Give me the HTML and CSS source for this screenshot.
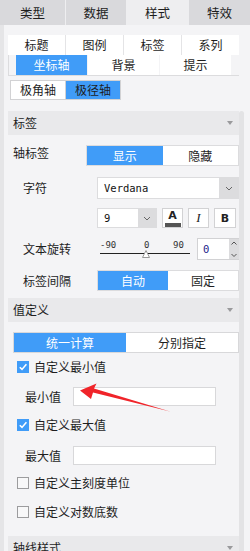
FILE: index.html
```html
<!DOCTYPE html>
<html lang="zh">
<head>
<meta charset="utf-8">
<link rel="stylesheet" href="styles.css">
</head>
<body>
<div class="app">
  <div class="tabs">
    <div class="tab">类型</div>
    <div class="tab">数据</div>
    <div class="tab active">样式</div>
    <div class="tab">特效</div>
  </div>
  <div class="main">
    <div class="gutter"></div>
    <div class="content">
      <div class="subtabs">
        <div class="subtab">标题</div>
        <div class="subtab">图例</div>
        <div class="subtab">标签</div>
        <div class="subtab">系列</div>
      </div>
      <div class="subtabs2">
        <div class="subtab2 on">坐标轴</div>
        <div class="subtab2">背景</div>
        <div class="subtab2">提示</div>
      </div>
      <div class="axis-switch">
        <div class="axis-item">极角轴</div>
        <div class="axis-item on">极径轴</div>
      </div>

      <div class="section-head"><span>标签</span><span class="caret"></span></div>

      <div class="row row-top">
        <div class="lbl lbl-main">轴标签</div>
        <div class="seg seg-wide">
          <div class="seg-item on">显示</div>
          <div class="seg-item">隐藏</div>
        </div>
      </div>

      <div class="row row-font">
        <div class="lbl lbl-sub">字符</div>
        <div class="select select-font">
          <span class="select-text">Verdana</span>
          <span class="select-arrow"><svg width="8" height="5" viewBox="0 0 8 5"><path d="M1 1 L4 4 L7 1" fill="none" stroke="#666" stroke-width="1"/></svg></span>
        </div>
      </div>

      <div class="row row-size">
        <div class="select select-size">
          <span class="select-text">9</span>
          <span class="select-arrow"><svg width="8" height="5" viewBox="0 0 8 5"><path d="M1 1 L4 4 L7 1" fill="none" stroke="#666" stroke-width="1"/></svg></span>
        </div>
        <div class="fbtn fbtn-a"><span class="a-glyph">A</span><span class="a-bar"></span></div>
        <div class="fbtn fbtn-i">I</div>
        <div class="fbtn fbtn-b">B</div>
      </div>

      <div class="row row-rot">
        <div class="lbl lbl-sub">文本旋转</div>
        <svg class="slider" width="100" height="22" viewBox="0 0 100 22">
          <text x="3" y="10" class="tick">-90</text>
          <text x="47" y="10" class="tick">0</text>
          <text x="76" y="10" class="tick">90</text>
          <line x1="3" y1="15.5" x2="93" y2="15.5" stroke="#222" stroke-width="1"/>
          <path d="M49 12.5 L52.5 19.5 L45.5 19.5 Z" fill="#fff" stroke="#999" stroke-width="1"/>
        </svg>
        <div class="numbox">
          <span class="num-text">0</span>
          <span class="spin">
            <svg width="10" height="22" viewBox="0 0 10 22"><path d="M2.5 5.5 L5 3 L7.5 5.5" fill="none" stroke="#555" stroke-width="1"/><path d="M2.5 15 L5 17.5 L7.5 15" fill="none" stroke="#555" stroke-width="1"/></svg>
          </span>
        </div>
      </div>

      <div class="row row-gap">
        <div class="lbl lbl-sub">标签间隔</div>
        <div class="seg seg-mid">
          <div class="seg-item on">自动</div>
          <div class="seg-item">固定</div>
        </div>
      </div>

      <div class="section-head head-val"><span>值定义</span><span class="caret"></span></div>

      <div class="seg seg-full">
        <div class="seg-item on">统一计算</div>
        <div class="seg-item">分别指定</div>
      </div>

      <div class="check-row cr-1"><span class="cb checked"><svg width="10" height="10" viewBox="0 0 10 10"><path d="M1.8 5.2 L4 7.4 L8.4 2.2" fill="none" stroke="#fff" stroke-width="1.6"/></svg></span><span>自定义最小值</span></div>
      <div class="val-row vr-1"><div class="lbl lbl-val">最小值</div><div class="input"></div></div>

      <div class="check-row cr-2"><span class="cb checked"><svg width="10" height="10" viewBox="0 0 10 10"><path d="M1.8 5.2 L4 7.4 L8.4 2.2" fill="none" stroke="#fff" stroke-width="1.6"/></svg></span><span>自定义最大值</span></div>
      <div class="val-row vr-2"><div class="lbl lbl-val">最大值</div><div class="input"></div></div>

      <div class="check-row cr-3"><span class="cb"></span><span>自定义主刻度单位</span></div>
      <div class="check-row cr-4"><span class="cb"></span><span>自定义对数底数</span></div>

      <div class="section-head head-axis"><span>轴线样式</span><span class="caret"></span></div>
    </div>
    <div class="scroll"><div class="thumb"></div></div>
  </div>
  <svg class="annot" width="250" height="551" viewBox="0 0 250 551">
    <polygon points="80,390.5 96.5,383.5 94,388.5 170,411.5 93,392.5 91,399" fill="#f0242a"/>
  </svg>
</div>
</body>
</html>
```
FILE: styles.css
```css
* { box-sizing: border-box; margin: 0; padding: 0; }
html, body { width: 250px; height: 551px; overflow: hidden; }
body {
  background: #f4f4f6;
  font-family: "Noto Sans CJK SC", "Noto Sans", sans-serif;
  font-size: 12px;
  color: #1e1e1e;
}
.app { position: relative; width: 250px; height: 551px; overflow: hidden; }

.tabs {
  display: grid;
  grid-template-columns: 65px 60px 61px 61px;
  column-gap: 1px;
  height: 25px;
  background: #eeeef0;
}
.tab {
  background: #d9d9dc;
  text-align: center;
  line-height: 25px;
  font-size: 12.5px;
}
.tab.active { background: #eeeef0; }

.main { display: flex; height: 526px; }
.gutter { width: 4px; background: #e5e5e7; }
.content { width: 235px; padding-left: 4px; overflow: hidden; }
.scroll { width: 11px; position: relative; }
.thumb {
  position: absolute; left: 0; top: 86px; width: 5px; bottom: 0;
  background: #e3e3e5; border-radius: 3px 3px 0 0;
}

.subtabs {
  margin-top: 10px;
  display: grid;
  grid-template-columns: repeat(4, 57px);
  column-gap: 1px;
  width: 231px;
  height: 20px;
  background: #e4e4e6;
}
.subtab { background: #fff; text-align: center; line-height: 20px; }

.subtabs2 {
  display: flex;
  gap: 1px;
  width: 231px;
  height: 21px;
  padding-left: 7px;
  border-left: 1px solid #dcdcde;
  border-bottom: 1px solid #dcdcde;
}
.subtab2 { width: 71px; height: 20px; background: #fff; text-align: center; line-height: 20px; }
.subtab2.on { background: #409cf8; color: #fff; }

.axis-switch {
  margin-top: 4px;
  margin-left: 2px;
  display: flex;
  width: 111px;
  height: 20px;
  border: 1px solid #d2d2d4;
}
.axis-item { width: 54px; background: #fff; text-align: center; line-height: 18px; }
.axis-item.on { width: 55px; background: #409cf8; border-left: 1px solid #d2d2d4; }

.section-head {
  margin-top: 11px;
  height: 24px;
  background: #e9e9eb;
  padding-left: 5px;
  padding-right: 6px;
  display: flex;
  justify-content: space-between;
  align-items: center;
  line-height: 24px;
}
.head-val { margin-top: 7px; }
.head-axis { margin-top: 16px; }
.caret {
  width: 0; height: 0;
  border-left: 3.5px solid transparent;
  border-right: 3.5px solid transparent;
  border-top: 4px solid #9a9a9c;
}

.row { display: flex; align-items: center; }
.lbl { flex: none; line-height: 16px; }
.lbl-main { width: 78px; padding-left: 5px; align-self: flex-start; }
.lbl-sub { width: 89px; padding-left: 15px; }

.row-top { margin-top: 10px; height: 21px; align-items: flex-start; }
.seg { display: flex; border: 1px solid #dcdcde; background: #fff; height: 21px; }
.seg-item { flex: 1; text-align: center; line-height: 19px; }
.seg-item.on { background: #409cf8; color: #fff; }
.seg-wide { width: 153px; }
.seg-mid { width: 142px; }
.seg-full { margin-top: 10px; margin-left: 5px; width: 226px; border-color: #d8d8da; }

.row-font { margin-top: 11px; height: 22px; }
.select {
  display: flex;
  background: #fff;
  border: 1px solid #dcdcde;
  height: 100%;
}
.select-font { width: 142px; }
.select-text {
  flex: 1;
  padding-left: 6px;
  font-family: "DejaVu Sans Mono", monospace;
  font-size: 10.5px;
  color: #111;
  display: flex;
  align-items: center;
}
.select-arrow {
  width: 19px;
  background: #dcdcde;
  display: flex;
  align-items: center;
  justify-content: center;
}

.row-size { margin-top: 9px; height: 20px; padding-left: 89px; }
.select-size { width: 60px; }
.select-size .select-arrow { width: 18px; }
.fbtn {
  height: 20px;
  width: 21px;
  margin-left: 5px;
  background: #fff;
  border: 1px solid #d2d2d4;
  display: flex;
  align-items: center;
  justify-content: center;
  color: #222;
}
.fbtn-b { width: 22px; font-family: "DejaVu Sans", sans-serif; font-weight: bold; font-size: 11px; }
.fbtn-i { font-family: "Liberation Serif", serif; font-style: italic; font-size: 13px; }
.fbtn-a { flex-direction: column; justify-content: flex-start; padding-top: 0; }
.a-glyph { font-family: "DejaVu Sans", sans-serif; font-weight: bold; font-size: 11px; line-height: 12px; margin-top: 1px; }
.a-bar { width: 16px; height: 4px; background: #555; margin-top: 1px; }

.row-rot { margin-top: 10px; height: 22px; }
.slider { flex: none; display: block; }
.tick { font-family: "DejaVu Sans Mono", monospace; font-size: 9px; fill: #333; }
.numbox {
  display: flex;
  width: 42px;
  height: 22px;
  background: #fff;
  border: 1px solid #d2d2d4;
  border-right: none;
}
.num-text {
  flex: 1;
  padding-left: 5px;
  font-family: "DejaVu Sans Mono", monospace;
  font-size: 10.5px;
  color: #1a1a8a;
  display: flex;
  align-items: center;
}
.spin { width: 10px; background: #dcdcde; display: flex; }

.row-gap { margin-top: 10px; height: 21px; }

.check-row {
  display: flex;
  align-items: center;
  gap: 5px;
  height: 16px;
  padding-left: 9px;
  line-height: 16px;
}
.cr-1 { margin-top: 6px; }
.cr-2 { margin-top: 11px; }
.cr-3 { margin-top: 10px; }
.cr-4 { margin-top: 13px; }
.cb {
  width: 12px; height: 12px;
  border: 1px solid #9c9c9e;
  background: #f8f8f9;
  display: flex;
  align-items: center;
  justify-content: center;
}
.cb.checked { background: #409cf8; border-color: #409cf8; }

.val-row { display: flex; align-items: center; height: 19px; }
.vr-1 { margin-top: 12px; }
.vr-2 { margin-top: 13px; }
.lbl-val { width: 65px; padding-left: 17px; }
.input { width: 143px; height: 19px; background: #fff; border: 1px solid #d8d8da; }

.annot { position: absolute; left: 0; top: 0; pointer-events: none; }
```
